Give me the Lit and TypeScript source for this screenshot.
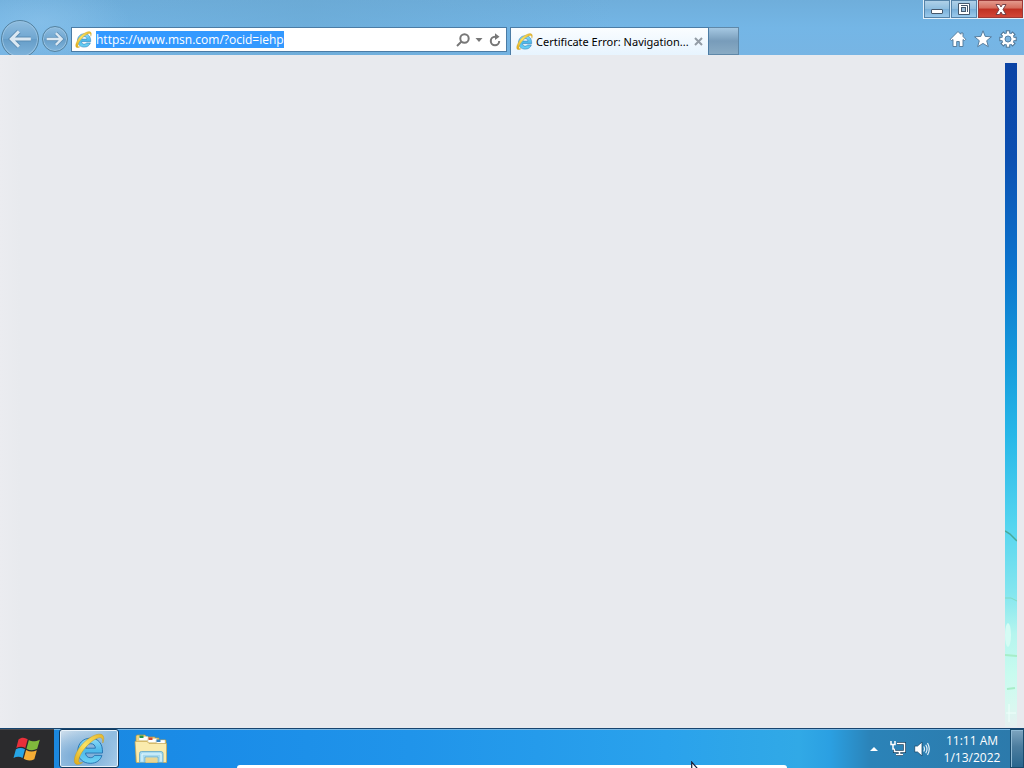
import { LitElement, html, css, svg } from "lit";
import { customElement } from "lit/decorators.js";

const ieLogo = (id: string) => html`
  <svg class="ie" viewBox="0 0 32 32" aria-hidden="true">
    <defs>
      <linearGradient id="${id}b" x1="0" y1="0" x2="0" y2="1">
        <stop offset="0" stop-color="#8fdcf8" /><stop offset=".5" stop-color="#4db9ea" /><stop offset="1" stop-color="#6fd3f5" />
      </linearGradient>
      <linearGradient id="${id}y" x1="0" y1="1" x2="1" y2="0">
        <stop offset="0" stop-color="#e0aa16" /><stop offset=".5" stop-color="#fbe264" /><stop offset="1" stop-color="#e5b62a" />
      </linearGradient>
    </defs>
    <path d="M29.500 20H12.500c.3 3 2.100 4.700 4.800 4.700 2 0 3.400-.8 4.200-2.300h7.400c-1.500 5.100-5.700 7.900-11.600 7.900C10 30.300 4.800 25.600 4.800 18 4.800 10.600 10 5.200 17.500 5.200c7.800 0 12.500 5.500 12 14.800zM12.700 15.200h9.700c-.2-2.900-1.900-4.500-4.700-4.500-2.800 0-4.600 1.700-5 4.500z"
      fill="url(#${id}b)" stroke="#2a78b5" stroke-width="1" />
    <path d="M29.800 10C31.500 5.500 31 2 28 1.300 21.800-.1 10.500 7.700 5.200 16.500.9 23.700 0 30 3.300 31.200c1.700.6 4-.2 6.300-1.700-2.600.7-3.900.2-3.900-1.700C5.700 23.500 10.500 15.500 17 10 22.300 5.500 26.800 3.700 28.500 5c1 .8 1.300 2.500 1.300 5z"
      fill="url(#${id}y)" stroke="#c09a24" stroke-width=".5" />
  </svg>`;

const minimizeIcon = svg`<rect x="2.500" y="6.500" width="11" height="4" rx=".5" fill="#fff" stroke="#45586c" />`;
const restoreIcon = svg`
  <path d="M2.500.5h11v11h-11z" fill="#fff" stroke="#45586c" />
  <path d="M5 2.500h6.500V9" fill="none" stroke="#45586c" />
  <rect x="5.500" y="4.500" width="4" height="4" fill="#9cbdd8" stroke="#45586c" />`;
const closeIcon = svg`<path d="M3 1.500h3.500L8 4l1.500-2.500H13L10 6.500l3 5H9.500L8 9l-1.500 2.500H3l3-5z" fill="#fff" stroke="#6a3a42" stroke-width=".9" />`;

@customElement("browser-chrome")
export class BrowserChrome extends LitElement {
  static styles = css`
    :host { display: block; background: linear-gradient(#6faedb, #74b6e6 50%, #77b5e4); }
    * { box-sizing: border-box; }
    button, input { font: inherit; margin: 0; padding: 0; border: 0; background: none; color: inherit; }
    svg { display: block; flex: none; }
    .shine { background: radial-gradient(ellipse 90px 40px at 40px 22px, #8fc5ec99, transparent), linear-gradient(90deg, #67a9d500 0, #67a6d080 30%, #67a6d000 60%); }
    .title { display: flex; justify-content: flex-end; height: 19px; }
    .win { display: flex; border: 1px solid #e4f1fb; border-top: 0; margin-left: auto; }
    .win button { display: grid; place-items: center; height: 18px; width: 27px; background: linear-gradient(#b3d3e9, #8ebddf 50%, #79afd8 51%, #9ecdef); border-right: 1px solid #dcecf8; box-shadow: inset 0 0 0 1px #5583a8; }
    .win svg { width: 16px; height: 13px; margin-top: 1px; }
    .win .close { width: 45px; border-right: 0; background: linear-gradient(#e6a093, #d56c5c 45%, #bf3022 50%, #d4493a); box-shadow: inset 0 0 0 1px #9b3a38; }
    .bar { display: flex; align-items: flex-start; height: 36px; overflow: hidden; padding-left: 1px; }
    .nav { display: flex; align-items: center; gap: 3px; width: 70px; flex: none; height: 40px; }
    .nav button { display: grid; place-items: center; flex: none; border: 1px solid #55829f; border-radius: 50%; background: linear-gradient(#8fbde0, #6fa6d0 50%, #669dc8 51%, #80b5dc); box-shadow: inset 0 0 0 1px #98c3e3; color: #dbe8f2; }
    .nav .back { width: 38px; height: 38px; }
    .nav .fwd { width: 26px; height: 26px; }
    .back svg { width: 26px; height: 26px; }
    .fwd svg { width: 20px; height: 20px; }
    .address { flex: 1; min-width: 0; display: flex; align-items: center; height: 25px; margin-top: 8px; padding: 0 3px; background: #fff; border: 1px solid #4b7ca5; font-size: 12px; line-height: 16px; color: #111; }
    .address .ie { width: 17px; height: 17px; margin-right: 4px; }
    .address input { flex: 1; min-width: 0; height: 17px; line-height: 16px; outline: 0; }
    .address input::selection { background: #3399ff; color: #fff; }
    .address button { display: grid; place-items: center; width: 16px; height: 20px; }
    .tabs { flex: 1; min-width: 0; display: flex; margin: 8px 0 0 3px; height: 28px; }
    .tab { display: flex; align-items: center; width: 199px; padding: 0 4px 0 5px; border: 1px solid #4b7ca5; border-bottom: 0; background: linear-gradient(#fafdff, #e7f4fe); color: #000; font-family: "Noto Sans", sans-serif; font-size: 11px; line-height: 16px; }
    .tab .ie { width: 17px; height: 17px; margin-right: 3px; }
    .tab a { flex: 1; min-width: 0; color: inherit; text-decoration: none; white-space: nowrap; }
    .tab button { display: grid; place-items: center; width: 11px; height: 16px; }
    .tabs .new { width: 30px; border: 1px solid #5f88a8; border-left: 0; background: linear-gradient(#a5c8e2, #789cba 50%, #89abc4); }
    .tools { display: flex; gap: 7px; padding: 11px 7px 0 0; margin-left: 11px; }
    .tools button { width: 18px; height: 18px; }
    .tools svg { width: 18px; height: 18px; }
  `;

  firstUpdated() {
    const box = this.renderRoot.querySelector("input") as HTMLInputElement;
    box.focus();
    box.select();
  }

  render() {
    const arrow = "M22 12H4M11 5 4 12l7 7";
    const teeth = [0, 45, 90, 135, 180, 225, 270, 315];
    return html`
      <div class="shine">
        <div class="title">
          <div class="win">
            <button aria-label="Minimize"><svg viewBox="0 0 16 13">${minimizeIcon}</svg></button>
            <button aria-label="Restore"><svg viewBox="0 0 16 13">${restoreIcon}</svg></button>
            <button class="close" aria-label="Close"><svg viewBox="0 0 16 13">${closeIcon}</svg></button>
          </div>
        </div>
        <div class="bar">
          <nav class="nav">
            <button class="back" aria-label="Back"><svg viewBox="0 0 24 24" fill="none">
              <path d="${arrow}" stroke="#5b8cb3" stroke-width="4.500" /><path d="${arrow}" stroke="currentColor" stroke-width="2.800" /></svg></button>
            <button class="fwd" aria-label="Forward"><svg viewBox="0 0 24 24" fill="none">
              <g transform="matrix(-1 0 0 1 24 0)"><path d="${arrow}" stroke="#5b8cb3" stroke-width="4.500" /><path d="${arrow}" stroke="currentColor" stroke-width="2.800" /></g></svg></button>
          </nav>
          <div class="address">
            ${ieLogo("a")}
            <input type="text" aria-label="Address" spellcheck="false" value="https://www.msn.com/?ocid=iehp" />
            <button aria-label="Search"><svg width="14" height="14" viewBox="0 0 14 14" fill="none" stroke="#777" stroke-width="2">
              <circle cx="8.500" cy="5.500" r="4.200" /><path d="M5.500 8.500 1 13" /></svg></button>
            <button aria-label="Show address list"><svg width="8" height="4" viewBox="0 0 8 4"><path d="M.5 0h7L4 4z" fill="#777" /></svg></button>
            <button aria-label="Refresh"><svg width="12" height="14" viewBox="0 0 12 14" fill="none">
              <path d="M7.500 3.800H6A4.200 4.200 0 1 0 10.200 8" stroke="#777" stroke-width="2" /><path d="M6 .3 10.500 3.800 6 7z" fill="#777" /></svg></button>
          </div>
          <div class="tabs">
            <div class="tab">
              ${ieLogo("t")}<a href="#">Certificate Error: Navigation...</a>
              <button aria-label="Close tab"><svg width="9" height="9" viewBox="0 0 9 9"><path d="M1 1l7 7M8 1 1 8" stroke="#939ca5" stroke-width="2" /></svg></button>
            </div>
            <button class="new" aria-label="New tab"></button>
          </div>
          <div class="tools">
            <button aria-label="Home"><svg viewBox="0 0 18 18"><path d="M9 1.500 1.300 9.300l1.200 1.200L4 9.500V16.500h3.700v-5h2.600v5H14V9.500l1.500 1 1.200-1.200L14 6.500V3h-2.200v1.300z" fill="#fff" stroke="#4f7595" stroke-width=".9" /></svg></button>
            <button aria-label="Favorites"><svg viewBox="0 0 18 18"><path d="M9 .8l2.200 5.600 6.200.4-4.700 3.900 1.600 6L9 13.400l-5.300 3.300 1.600-6L.6 6.800l6.200-.4z" fill="#fff" stroke="#4f7595" stroke-width=".9" /></svg></button>
            <button aria-label="Tools"><svg viewBox="0 0 18 18">
              ${teeth.map((a) => svg`<rect x="7.300" y=".8" width="3.400" height="5" fill="#fff" stroke="#4f7595" stroke-width="1" transform="rotate(${a} 9 9)" />`)}
              <circle cx="9" cy="9" r="4.500" fill="#7db5e0" stroke="#fff" stroke-width="2.600" />
              <circle cx="9" cy="9" r="3" fill="none" stroke="#4f7595" stroke-width=".8" /></svg></button>
          </div>
        </div>
      </div>`;
  }
}

@customElement("task-bar")
export class TaskBar extends LitElement {
  static styles = css`
    :host { display: block; }
    * { box-sizing: border-box; }
    button { font: inherit; margin: 0; padding: 0; border: 0; background: none; color: inherit; }
    svg { display: block; flex: none; }
    .bar { display: flex; align-items: stretch; height: 40px; border-top: 1px solid #17456f; box-shadow: inset 0 1px #79b7e3; color: #fff;
      background: linear-gradient(90deg, #1b86dc 0, #1a8ce8 20%, #2094ea 40%, #2aa2ec 65%, #31a9e6 78%, #2ba0e2 81%, #2b83b8 85%, #2c79aa 100%); }
    .start { display: grid; place-items: center; width: 54px; background: #2b2b2d; margin-right: 5px; border-top: 1px solid #48484c; }
    .app { display: grid; place-items: center; width: 60px; }
    .active { border: 1px solid #123a5e; border-radius: 3px; background: radial-gradient(ellipse at 30% 70%, #78aad6, transparent 70%), linear-gradient(135deg, #cfdfec, #8fbce0 60%, #a9cdea); box-shadow: inset 0 0 0 1px #e8f3fb; }
    .active .ie { width: 32px; height: 32px; }
    .folder { width: 64px; }
    .tray { display: flex; align-items: center; margin-left: auto; }
    .tray button { display: grid; place-items: center; width: 24px; height: 24px; }
    .clock { width: 76px; text-align: center; font-size: 12px; line-height: 17px; padding-top: 1px; }
    .tray .show { align-self: stretch; height: auto; width: 14px; border: 1px solid #184a6c; box-shadow: inset 1px 1px #8fb9d4; background: linear-gradient(#7ea5c0, #4c7d9f 45%, #29668e); }
  `;

  render() {
    return html`
      <footer class="bar">
        <button class="start" aria-label="Start"><svg width="28" height="28" viewBox="0 0 28 28">
          <path d="M5.500 4.500C8.500 2 11.500 2.300 14.700 4.200L12.300 13C9.500 11.200 6.500 11.200 3.300 13z" fill="#e8303a" />
          <path d="M15.900 4.900C19.200 6.900 22 6.800 26.800 4.800L24.200 13.800C20.500 15.800 17 15.800 13.500 13.700z" fill="#80b93c" />
          <path d="M2.900 14.300C6 12.500 9 12.400 12 14.300L9.600 23C6.800 21.200 3.800 21.200.5 23z" fill="#27a5e5" />
          <path d="M13.100 15C16.600 17 20 17 23.800 15.200L21.300 24.200C17.800 26 14.300 25.900 10.700 23.800z" fill="#f5ad35" />
        </svg></button>
        <button class="app active" aria-label="Internet Explorer">${ieLogo("b")}</button>
        <button class="app folder" aria-label="File Explorer"><svg width="34" height="30" viewBox="0 0 34 30">
          <path d="M2 4.500V2.500Q2 1 3.500 1H11l2 2h8v1h4v2h7v22H2z" fill="#efd783" stroke="#b7953d" stroke-width=".7" />
          <path d="M5 2.500h9v4H5zM14 4.500h9v4h-9zM22 6h9v4h-9z" fill="#fff" stroke="#c6bb92" stroke-width=".4" />
          <path d="M5.500 1.500h4v2.500h-4z" fill="#249549" /><path d="M14.500 3.500h4V6h-4z" fill="#d34a33" /><path d="M22.500 5.500h4V8h-4z" fill="#3983bd" />
          <path d="M1 7.500h12l2 2h17.500V28.500H2.500z" fill="#faebad" stroke="#c9a956" stroke-width=".7" />
          <path d="M5.500 28.500V19.500q0-2 2-2h19.500q2 0 2 2v9h-5V23H11v5.500z" fill="#a7daef" stroke="#5fa6c7" stroke-width=".8" />
          <path d="M8 27.500V20h19v7.500" fill="none" stroke="#e8fbff" /><path d="M12 24h11v4.500H12z" fill="#e9d693" />
        </svg></button>
        <div class="tray">
          <button aria-label="Show hidden icons"><svg width="8" height="4" viewBox="0 0 8 4"><path d="M0 4h8L4 0z" fill="#fff" /></svg></button>
          <button aria-label="Network"><svg width="17" height="15" viewBox="0 0 17 15">
            <path d="M7 2.500h7.500v8h-10V8M9.500 10.500v3M6 13.500h7" fill="none" stroke="#133e5e" stroke-width="3" />
            <path d="M7 2.500h7.500v8h-10V8M9.500 10.500v3M6 13.500h7" fill="none" stroke="#fff" stroke-width="1.500" />
            <path d="M1 0v3.500h4V0M3 3.500v4.500h1.500" fill="none" stroke="#fff" stroke-width="1.500" />
          </svg></button>
          <button aria-label="Volume"><svg width="16" height="16" viewBox="0 0 16 16">
            <path d="M.7 5h2.800L8 1v14l-4.500-4H.7z" fill="#fff" stroke="#174a6d" stroke-width=".8" />
            <path d="M9.700 5.500q1.600 2.500 0 5M11.700 3.700q2.700 4.300 0 8.600M13.500 2q3.500 6 0 12" fill="none" stroke="#e4f2fa" stroke-width="1.200" />
          </svg></button>
          <div class="clock"><div>11:11 AM</div><div>1/13/2022</div></div>
          <button class="show" aria-label="Show desktop"></button>
        </div>
      </footer>`;
  }
}

@customElement("app-root")
export class AppRoot extends LitElement {
  static styles = css`
    :host { display: flex; flex-direction: column; height: 100vh; position: relative; overflow: hidden; background: #e8eaee; font-family: "Open Sans", "Noto Sans", sans-serif; }
    .page { flex: 1; min-height: 0; display: flex; justify-content: flex-end; padding: 8px 7px 1px 0; background: linear-gradient(90deg, #ebecf0, #e8eaee 20px); }
    .strip { width: 12px; background: linear-gradient(#0a43a5 0, #0b4fb1 14%, #0b72cc 30%, #159bdc 45%, #27b7e8 56%, #52d4ef 69%, #84e6ef 80%, #b5f5ee 86%, #c8fbef 92%, #d9f8f0 97%, #e5eff0 100%); }
    .strip svg { display: block; width: 100%; height: 100%; }
    .sheet { position: absolute; left: 50%; bottom: 0; width: 550px; height: 3px; margin-left: -275px; border-radius: 8px 8px 0 0; background: #fff; }
    .pointer { position: absolute; left: 691px; top: calc(100% - 7px); }
  `;

  render() {
    return html`
      <browser-chrome></browser-chrome>
      <main class="page">
        <div class="strip"><svg viewBox="0 0 12 664" preserveAspectRatio="none" fill="none">
          <path d="M0 468l5 3 7 7" stroke="#48a99b" stroke-width="1.500" /><path d="M0 535l6 0 6 3" stroke="#81d8c2" />
          <path d="M0 592l12 1M2 626l8-1" stroke="#a7edc8" stroke-width="2" /><ellipse cx="3" cy="572" rx="3" ry="12" fill="#d5fbf4" />
          <path d="M4 641v18M1 650h10" stroke="#effffb" />
        </svg></div>
      </main>
      <task-bar></task-bar>
      <div class="sheet"></div>
      <svg class="pointer" width="12" height="19" viewBox="0 0 12 19" aria-hidden="true"><path d="M.7 1v16l4-4h6.500z" fill="#fff" stroke="#151c38" stroke-width="1.200" /></svg>`;
  }
}
